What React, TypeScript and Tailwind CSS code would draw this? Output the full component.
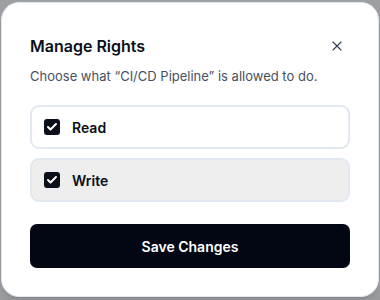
import { useState } from "react";
import { X, Check } from "lucide-react";

interface Right {
  id: string;
  label: string;
}

const rights: Right[] = [
  { id: "read", label: "Read" },
  { id: "write", label: "Write" },
];

export default function App() {
  const [checked, setChecked] = useState<Record<string, boolean>>({ read: true, write: true });

  return (
    <div className="h-[300px] w-[380px] overflow-hidden bg-[#9d9fa3] pt-[2px] pl-[1px]" style={{ fontFamily: "Inter, 'Noto Sans', sans-serif" }}>
      <div className="h-[295px] w-[378px] rounded-[18px] border border-[#dfe6ee] bg-white px-[28px] pt-[31px] shadow-lg">
        {/* Header */}
        <div className="flex items-center justify-between">
          <h2 className="text-[16px] font-semibold leading-6 text-[#0b0f19]">Manage Rights</h2>
          <button className="mr-[5px] text-[#334155]">
            <X size={16} strokeWidth={1.6} />
          </button>
        </div>
        <p className="mt-[8px] text-[13px] leading-5 text-[#475063]">
          Choose what “CI/CD Pipeline” is allowed to do.
        </p>

        {/* Rights */}
        <div className="mt-[19px] flex flex-col gap-[9px]">
          {rights.map((r) => (
            <label
              key={r.id}
              className={`flex h-[44px] cursor-pointer items-center gap-3 rounded-[9px] border-2 border-[#e2e8f0] px-[12px] ${
                r.id === "write" ? "bg-[#eeeeee]" : "bg-white"
              }`}
            >
              <span
                onClick={() => setChecked({ ...checked, [r.id]: !checked[r.id] })}
                className="flex h-4 w-4 items-center justify-center rounded-[3px] bg-[#0b0f19] text-white"
              >
                {checked[r.id] && <Check size={12} strokeWidth={4} />}
              </span>
              <span className="text-[14px] font-semibold text-[#0b0f19]">{r.label}</span>
            </label>
          ))}
        </div>

        <button className="mt-[22px] h-[44px] w-full rounded-[7px] bg-[#020713] text-[14px] font-semibold text-white">
          Save Changes
        </button>
      </div>
    </div>
  );
}
